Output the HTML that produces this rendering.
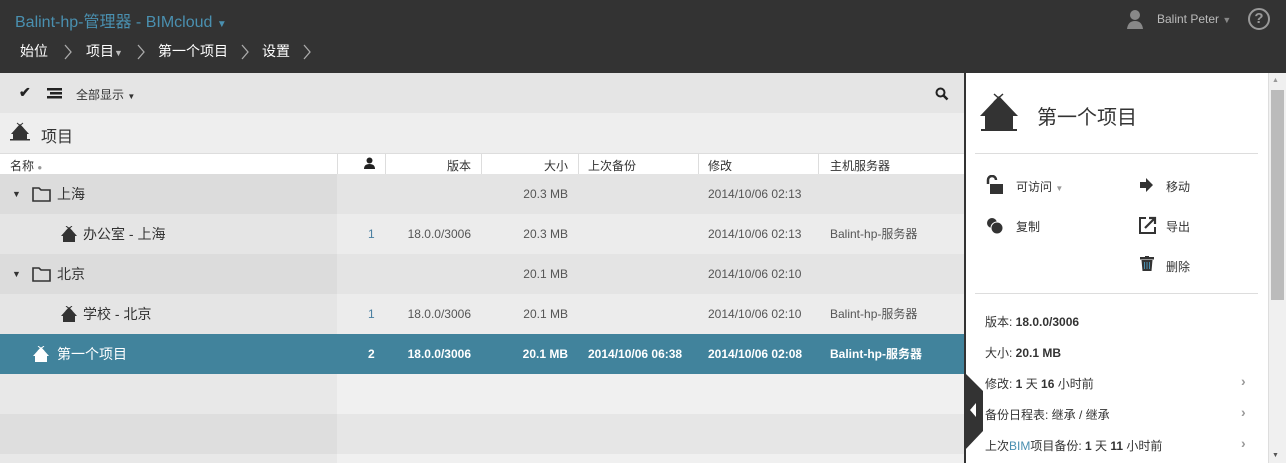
<!DOCTYPE html>
<html><head><meta charset="utf-8"><style>
*{margin:0;padding:0;box-sizing:border-box}
html{width:1286px;height:463px;overflow:hidden}
body{width:1286px;height:463px;overflow:hidden;font-family:"Liberation Sans","Noto Sans CJK SC",sans-serif;font-size:12px;color:#333;background:#fff;position:relative}
.abs{position:absolute}
.hdr{left:0;top:0;width:1286px;height:73px;background:#333}
.row{position:absolute;left:0;width:964px;height:40px}
.c{position:absolute;top:0;height:40px;line-height:40px;white-space:nowrap}
.r{text-align:right}
.sep{position:absolute;top:153px;width:1px;height:21px;background:#ddd}
</style></head><body>
<div class="abs hdr"></div>
<div class="abs" style="left:15px;top:8px;font-size:16px;color:#4a90b0">Balint-hp-管理器 - BIMcloud <span style="font-size:10px">▼</span></div>
<div class="abs" style="left:20px;top:41px;font-size:14px;color:#fff;word-spacing:0">始位</div>
<svg class="abs" style="left:64px;top:44px" width="8" height="16"><path d="M1 1L7 8L1 15" fill="none" stroke="#aaa" stroke-width="1.3"/></svg>
<div class="abs" style="left:86px;top:41px;font-size:14px;color:#fff">项目<span style="font-size:9px;color:#bbb">▼</span></div>
<svg class="abs" style="left:137px;top:44px" width="8" height="16"><path d="M1 1L7 8L1 15" fill="none" stroke="#aaa" stroke-width="1.3"/></svg>
<div class="abs" style="left:158px;top:41px;font-size:14px;color:#fff">第一个项目</div>
<svg class="abs" style="left:241px;top:44px" width="8" height="16"><path d="M1 1L7 8L1 15" fill="none" stroke="#aaa" stroke-width="1.3"/></svg>
<div class="abs" style="left:262px;top:41px;font-size:14px;color:#fff">设置</div>
<svg class="abs" style="left:303px;top:44px" width="8" height="16"><path d="M1 1L7 8L1 15" fill="none" stroke="#aaa" stroke-width="1.3"/></svg>
<svg class="abs" style="left:1126px;top:9px" width="18" height="21"><circle cx="9" cy="6" r="5" fill="#888"/><path d="M1 20 Q2 12 9 12 Q16 12 17 20Z" fill="#888"/></svg>
<div class="abs" style="left:1157px;top:12px;font-size:12px;color:#bbb">Balint Peter <span style="font-size:9px;color:#888">▼</span></div>
<div class="abs" style="left:1248px;top:8px;width:22px;height:22px;border:2px solid #999;border-radius:50%;color:#999;font-size:15px;font-weight:bold;text-align:center;line-height:18px">?</div>

<div class="abs" style="left:0;top:73px;width:964px;height:40px;background:#e5e5e5"></div>
<div class="abs" style="left:19px;top:84px;font-size:14px;font-weight:bold;color:#222">✔</div>
<svg class="abs" style="left:47px;top:88px" width="15" height="11"><rect y="0" width="15" height="2.5" fill="#222"/><rect x="3" y="4" width="12" height="2.5" fill="#222"/><rect y="8" width="15" height="2.5" fill="#222"/></svg>
<div class="abs" style="left:76px;top:86px">全部显示 <span style="font-size:8px">▼</span></div>
<svg class="abs" style="left:935px;top:87px" width="14" height="14"><circle cx="5.5" cy="5.5" r="4" stroke="#222" stroke-width="2" fill="none"/><path d="M8.5 8.5L12.5 12.5" stroke="#222" stroke-width="2.5"/></svg>
<div class="abs" style="left:0;top:113px;width:964px;height:40px;background:#eee"></div>
<svg class="abs" style="left:10px;top:122px" width="20" height="20"><path d="M10 2L1 12h2v6h14v-6h2z" fill="#333"/><path d="M7 1L13 6M13 1L7 6" stroke="#333"/><rect x="0" y="17" width="20" height="1.5" fill="#333"/></svg>
<div class="abs" style="left:41px;top:123px;font-size:16px">项目</div>
<div class="abs" style="left:0;top:153px;width:964px;height:21px;background:#fff;border-top:1px solid #ddd"></div>
<div class="sep" style="left:337px"></div><div class="sep" style="left:385px"></div><div class="sep" style="left:481px"></div><div class="sep" style="left:578px"></div><div class="sep" style="left:698px"></div><div class="sep" style="left:818px"></div>
<div class="abs" style="left:10px;top:157px">名称 <span style="font-size:8px;color:#999">●</span></div>
<svg class="abs" style="left:364px;top:157px" width="11" height="12"><circle cx="5.5" cy="3.5" r="3" fill="#222"/><path d="M0 12Q0 7 5.5 7Q11 7 11 12Z" fill="#222"/></svg>
<div class="abs" style="left:386px;top:157px;width:85px;text-align:right">版本</div>
<div class="abs" style="left:482px;top:157px;width:86px;text-align:right">大小</div>
<div class="abs" style="left:588px;top:157px">上次备份</div>
<div class="abs" style="left:708px;top:157px">修改</div>
<div class="abs" style="left:830px;top:157px">主机服务器</div>

<div class="row" style="top:174px;background:#e4e4e4"><div class="c" style="left:0;width:337px;background:#dcdcdc"></div>
<div class="c" style="left:12px;font-size:9px">▼</div>
<svg class="abs" style="left:32px;top:13px" width="19" height="15"><path d="M1 1h6l2 2h9v11H1z" fill="none" stroke="#333" stroke-width="1.6"/></svg>
<div class="c" style="left:57px;font-size:14px">上海</div>
<div class="c r" style="left:482px;width:86px;color:#555">20.3 MB</div><div class="c" style="left:708px;color:#555">2014/10/06 02:13</div></div>

<div class="row" style="top:214px;background:#ececec"><div class="c" style="left:0;width:337px;background:#e5e5e5"></div>
<svg class="abs" style="left:60px;top:12px" width="18" height="17"><path d="M9 1L1 10h2v6h12v-6h2z" fill="#333"/><path d="M6 0L12 5M12 0L6 5" stroke="#333"/></svg>
<div class="c" style="left:83px;font-size:14px">办公室 - 上海</div>
<div class="c" style="left:368px;color:#4a7fa0">1</div>
<div class="c r" style="left:386px;width:85px;color:#555">18.0.0/3006</div>
<div class="c r" style="left:482px;width:86px;color:#555">20.3 MB</div><div class="c" style="left:708px;color:#555">2014/10/06 02:13</div><div class="c" style="left:830px;color:#555">Balint-hp-服务器</div></div>

<div class="row" style="top:254px;background:#e4e4e4"><div class="c" style="left:0;width:337px;background:#dcdcdc"></div>
<div class="c" style="left:12px;font-size:9px">▼</div>
<svg class="abs" style="left:32px;top:13px" width="19" height="15"><path d="M1 1h6l2 2h9v11H1z" fill="none" stroke="#333" stroke-width="1.6"/></svg>
<div class="c" style="left:57px;font-size:14px">北京</div>
<div class="c r" style="left:482px;width:86px;color:#555">20.1 MB</div><div class="c" style="left:708px;color:#555">2014/10/06 02:10</div></div>

<div class="row" style="top:294px;background:#ececec"><div class="c" style="left:0;width:337px;background:#e5e5e5"></div>
<svg class="abs" style="left:60px;top:12px" width="18" height="17"><path d="M9 1L1 10h2v6h12v-6h2z" fill="#333"/><path d="M6 0L12 5M12 0L6 5" stroke="#333"/></svg>
<div class="c" style="left:83px;font-size:14px">学校 - 北京</div>
<div class="c" style="left:368px;color:#4a7fa0">1</div>
<div class="c r" style="left:386px;width:85px;color:#555">18.0.0/3006</div>
<div class="c r" style="left:482px;width:86px;color:#555">20.1 MB</div><div class="c" style="left:708px;color:#555">2014/10/06 02:10</div><div class="c" style="left:830px;color:#555">Balint-hp-服务器</div></div>

<div class="row" style="top:334px;background:#41839c;color:#fff">
<svg class="abs" style="left:32px;top:12px" width="18" height="17"><path d="M9 1L1 10h2v6h12v-6h2z" fill="#fff"/><path d="M6 0L12 5M12 0L6 5" stroke="#fff"/></svg>
<div class="c" style="left:57px;font-size:14px">第一个项目</div>
<div class="c" style="left:368px;font-weight:bold">2</div>
<div class="c r" style="left:386px;width:85px;font-weight:bold">18.0.0/3006</div>
<div class="c r" style="left:482px;width:86px;font-weight:bold">20.1 MB</div><div class="c" style="left:588px;font-weight:bold">2014/10/06 06:38</div><div class="c" style="left:708px;font-weight:bold">2014/10/06 02:08</div><div class="c" style="left:830px;font-weight:bold">Balint-hp-服务器</div></div>

<div class="row" style="top:374px;background:#f0f0f0"><div class="c" style="left:0;width:337px;background:#e8e8e8"></div></div>
<div class="row" style="top:414px;background:#e6e6e6"><div class="c" style="left:0;width:337px;background:#dedede"></div></div>
<div class="row" style="top:454px;height:9px;background:#f0f0f0"><div class="c" style="left:0;width:337px;height:9px;background:#e8e8e8"></div></div>

<div class="abs" style="left:964px;top:73px;width:2px;height:390px;background:#333"></div>
<div class="abs" style="left:1268px;top:73px;width:18px;height:390px;background:#f0f0f0;border-left:1px solid #ddd"></div>
<div class="abs" style="left:1271px;top:90px;width:13px;height:210px;background:#bbb"></div>
<div class="abs" style="left:1272px;top:77px;font-size:7px;color:#999">▲</div>
<div class="abs" style="left:1272px;top:452px;font-size:7px;color:#555">▼</div>
<svg class="abs" style="left:979px;top:92px" width="40" height="40"><path d="M20 4L1 24h5v14h28V24h5z" fill="#333"/><path d="M15 2L24 10M24 2L15 10" stroke="#333" stroke-width="1.5"/><rect x="2" y="37" width="36" height="2" fill="#333"/></svg>
<div class="abs" style="left:1037px;top:101px;font-size:20px">第一个项目</div>
<div class="abs" style="left:975px;top:153px;width:283px;height:1px;background:#ddd"></div>
<svg class="abs" style="left:985px;top:175px" width="20" height="20"><path d="M3 9V5a4 4 0 0 1 8 0" fill="none" stroke="#333" stroke-width="2.5"/><rect x="5" y="9" width="13" height="10" fill="#333"/></svg>
<div class="abs" style="left:1016px;top:178px">可访问 <span style="font-size:8px;color:#999">▼</span></div>
<svg class="abs" style="left:1140px;top:178px" width="14" height="14"><path d="M0 4h6V0l7 7-7 7v-4H0z" fill="#333"/></svg>
<div class="abs" style="left:1166px;top:178px">移动</div>
<svg class="abs" style="left:986px;top:216px" width="20" height="20"><circle cx="6" cy="7" r="5" fill="#333"/><circle cx="11" cy="12" r="6" fill="#333" stroke="#fff" stroke-width="1"/></svg>
<div class="abs" style="left:1016px;top:218px">复制</div>
<svg class="abs" style="left:1139px;top:216px" width="18" height="18"><path d="M7 2H1v15h15v-6" fill="none" stroke="#333" stroke-width="2"/><path d="M6 12L15 3M10 2h6v6" fill="none" stroke="#333" stroke-width="2.2"/></svg>
<div class="abs" style="left:1166px;top:218px">导出</div>
<svg class="abs" style="left:1140px;top:256px" width="14" height="16"><rect x="0" y="1" width="14" height="2.5" fill="#333"/><rect x="5" y="0" width="4" height="2" fill="#333"/><path d="M1.5 4h11l-1 11h-9z" fill="#333"/><path d="M4.5 6v7M7 6v7M9.5 6v7" stroke="#4a8fb0" stroke-width="1"/></svg>
<div class="abs" style="left:1166px;top:258px">删除</div>
<div class="abs" style="left:975px;top:293px;width:283px;height:1px;background:#ddd"></div>
<div class="abs" style="left:985px;top:313px">版本: <b>18.0.0/3006</b></div>
<div class="abs" style="left:985px;top:344px">大小: <b>20.1 MB</b></div>
<div class="abs" style="left:985px;top:375px">修改: <b>1</b> 天 <b>16</b> 小时前</div>
<div class="abs" style="left:985px;top:406px">备份日程表: 继承 / 继承</div>
<div class="abs" style="left:985px;top:437px">上次<span style="color:#4a8fb0">BIM</span>项目备份: <b>1</b> 天 <b>11</b> 小时前</div>
<div class="abs" style="left:1241px;top:373px;color:#999;font-weight:bold;font-size:14px">›</div>
<div class="abs" style="left:1241px;top:404px;color:#999;font-weight:bold;font-size:14px">›</div>
<div class="abs" style="left:1241px;top:435px;color:#999;font-weight:bold;font-size:14px">›</div>
<svg class="abs" style="left:964px;top:372px" width="20" height="80"><path d="M0 0L19 19V59L0 79Z" fill="#333"/><path d="M12 31L6 38L12 45Z" fill="#fff"/></svg>
</body></html>
